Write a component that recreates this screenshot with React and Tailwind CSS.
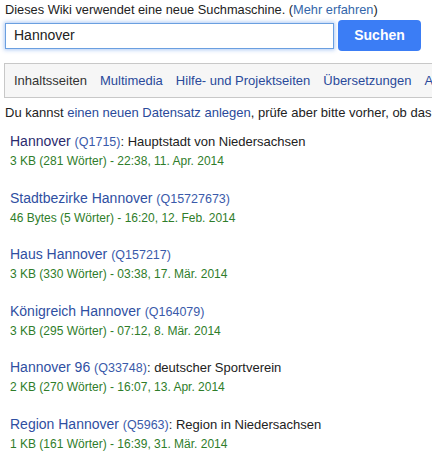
const results = [
  {
    title: "Hannover",
    id: "Q1715",
    desc: "Hauptstadt von Niedersachsen",
    meta: "3 KB (281 Wörter) - 22:38, 11. Apr. 2014",
    visited: true,
  },
  {
    title: "Stadtbezirke Hannover",
    id: "Q15727673",
    meta: "46 Bytes (5 Wörter) - 16:20, 12. Feb. 2014",
  },
  {
    title: "Haus Hannover",
    id: "Q157217",
    meta: "3 KB (330 Wörter) - 03:38, 17. Mär. 2014",
  },
  {
    title: "Königreich Hannover",
    id: "Q164079",
    meta: "3 KB (295 Wörter) - 07:12, 8. Mär. 2014",
  },
  {
    title: "Hannover 96",
    id: "Q33748",
    desc: "deutscher Sportverein",
    meta: "2 KB (270 Wörter) - 16:07, 13. Apr. 2014",
  },
  {
    title: "Region Hannover",
    id: "Q5963",
    desc: "Region in Niedersachsen",
    meta: "1 KB (161 Wörter) - 16:39, 31. Mär. 2014",
  },
];

const tabs = ["Inhaltsseiten", "Multimedia", "Hilfe- und Projektseiten", "Übersetzungen", "Alles"];

const App = () => {
  return (
    <div
      className="w-[432px] h-[462px] overflow-hidden bg-white text-[#222]"
      style={{ fontFamily: '"Liberation Sans", Arial, sans-serif' }}
    >
      {/* Notice */}
      <div className="pl-[5px] pt-[2px] text-[12.8px] leading-[16px] whitespace-nowrap">
        Dieses Wiki verwendet eine neue Suchmaschine. (
        <span className="text-[#3366aa]">Mehr erfahren</span>)
      </div>

      {/* Search row */}
      <div className="flex items-center pl-[5px] mt-[2px]">
        <div className="w-[329px] h-[26px] border border-[#6a9fe0] shadow-[0_0_4px_1px_rgba(80,140,230,0.45)] bg-white flex items-center pl-[8px] text-[14px]">
          Hannover
        </div>
        <button className="ml-[4px] w-[83px] h-[31px] rounded-[4px] bg-[#3b7df5] text-white font-bold text-[14px]">
          Suchen
        </button>
      </div>

      {/* Tabs */}
      <div className="ml-[4px] mt-[12px] h-[35px] border border-r-0 border-[#c8c8c8] bg-[#f6f6f6] flex items-center pl-[9px] gap-[13px] text-[13px] whitespace-nowrap overflow-hidden">
        {tabs.map((t, i) => (
          <span key={t} className={i === 0 ? "text-[#333]" : "text-[#2a4a9a]"}>
            {t}
          </span>
        ))}
      </div>

      {/* Create notice */}
      <div className="pl-[5px] mt-[7px] text-[13px] leading-[16px] whitespace-nowrap overflow-hidden">
        Du kannst <span className="text-[#2a4a9a]">einen neuen Datensatz anlegen</span>, prüfe aber bitte vorher, ob das
      </div>

      {/* Results */}
      <div className="pl-[10px] mt-[12px] flex flex-col gap-[20.5px]">
        {results.map((r) => (
          <div key={r.id} className="flex flex-col gap-[3px]">
            <div className="text-[14px] leading-[16px] whitespace-nowrap">
              <span className={r.visited ? "text-[#2b2b6e]" : "text-[#2f4fa2]"}>{r.title}</span>{" "}
              <span className="text-[12.5px] text-[#3a5aaa]">({r.id})</span>
              {r.desc && <span className="text-[13px] text-[#222]">: {r.desc}</span>}
            </div>
            <div className="text-[12px] leading-[16px] text-[#2f7d2a] whitespace-nowrap">{r.meta}</div>
          </div>
        ))}
      </div>
    </div>
  );
};

export default App;
